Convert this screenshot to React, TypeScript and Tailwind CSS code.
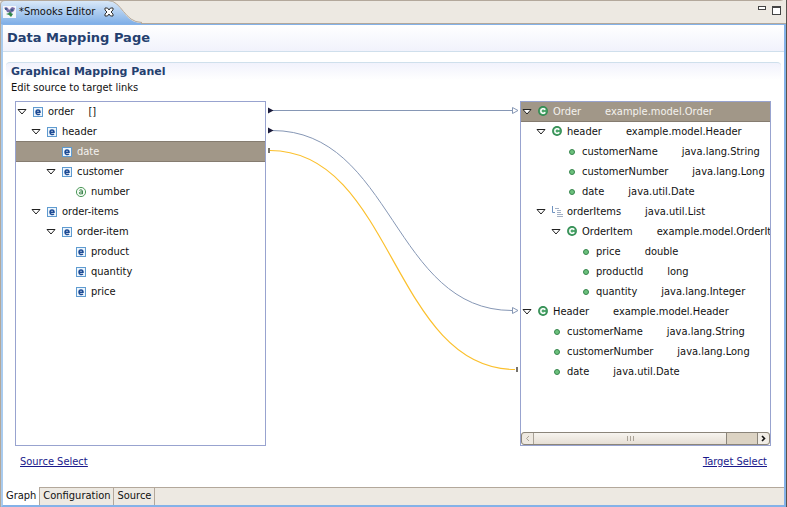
import { clsx } from "clsx"

type IconKind = "element" | "attribute" | "class" | "field" | "list"

interface TreeItem {
  label: string
  type?: string
  icon: IconKind
  level: number
  expanded?: boolean
  selected?: boolean
}

const sourceItems: TreeItem[] = [
  { label: "order", type: "[]", icon: "element", level: 0, expanded: true },
  { label: "header", icon: "element", level: 1, expanded: true },
  { label: "date", icon: "element", level: 2, selected: true },
  { label: "customer", icon: "element", level: 2, expanded: true },
  { label: "number", icon: "attribute", level: 3 },
  { label: "order-items", icon: "element", level: 1, expanded: true },
  { label: "order-item", icon: "element", level: 2, expanded: true },
  { label: "product", icon: "element", level: 3 },
  { label: "quantity", icon: "element", level: 3 },
  { label: "price", icon: "element", level: 3 },
]

const targetItems: TreeItem[] = [
  { label: "Order", type: "example.model.Order", icon: "class", level: 0, expanded: true, selected: true },
  { label: "header", type: "example.model.Header", icon: "class", level: 1, expanded: true },
  { label: "customerName", type: "java.lang.String", icon: "field", level: 2 },
  { label: "customerNumber", type: "java.lang.Long", icon: "field", level: 2 },
  { label: "date", type: "java.util.Date", icon: "field", level: 2 },
  { label: "orderItems", type: "java.util.List", icon: "list", level: 1, expanded: true },
  { label: "OrderItem", type: "example.model.OrderItem", icon: "class", level: 2, expanded: true },
  { label: "price", type: "double", icon: "field", level: 3 },
  { label: "productId", type: "long", icon: "field", level: 3 },
  { label: "quantity", type: "java.lang.Integer", icon: "field", level: 3 },
  { label: "Header", type: "example.model.Header", icon: "class", level: 0, expanded: true },
  { label: "customerName", type: "java.lang.String", icon: "field", level: 1 },
  { label: "customerNumber", type: "java.lang.Long", icon: "field", level: 1 },
  { label: "date", type: "java.util.Date", icon: "field", level: 1 },
]

const indents = ["pl-px", "pl-[15px]", "pl-[30px]", "pl-[44px]"]

function ItemIcon({ kind }: { kind: IconKind }) {
  if (kind === "element") {
    return (
      <svg width="12" height="12" viewBox="0 0 12 12" fill="none">
        <rect x="1.5" y="1.5" width="9" height="9" fill="#eef6fd" stroke="#5f9bd0" />
        <path d="M4 6.2H8C8 3.3 4 3.3 4 6.2C4 9 7 8.8 8 8" stroke="#1c4a94" strokeWidth="1.5" />
      </svg>
    )
  }
  if (kind === "attribute") {
    return (
      <svg width="12" height="12" viewBox="0 0 12 12" fill="none">
        <circle cx="6" cy="6" r="4.6" fill="#f2faf2" stroke="#4f9a5c" />
        <path d="M4.4 4.4C5 3.6 7.4 3.6 7.4 5V8.2M7.4 6C5 5.8 4.3 6.3 4.3 7.1C4.3 8.2 6.6 8.2 7.4 7.1" stroke="#2f7d42" />
      </svg>
    )
  }
  if (kind === "class") {
    return (
      <svg width="12" height="12" viewBox="0 0 12 12" fill="none">
        <circle cx="6" cy="5" r="4.9" fill="#2f8a50" />
        <circle cx="6" cy="5" r="3.7" fill="#4ca56a" />
        <path d="M8.2 3.8C7 2 3.8 2.5 3.8 5C3.8 7.5 7 8 8.2 6.2" stroke="#fff" strokeWidth="1.6" />
      </svg>
    )
  }
  if (kind === "list") {
    return (
      <svg width="12" height="12" viewBox="0 0 12 12" fill="none">
        <path d="M1.5 0V6.5H4" stroke="#6f93c0" />
        <path d="M4 2.5H8M6 4.5H10M6 6.5H10M6 8.5H12M6 10.5H12" stroke="#a3b1c6" />
      </svg>
    )
  }
  return (
    <svg width="12" height="12" viewBox="0 0 12 12" fill="none">
      <circle cx="6" cy="6" r="2.5" fill="#6cc07c" stroke="#36864d" />
    </svg>
  )
}

function TreeRow({ item }: { item: TreeItem }) {
  return (
    <li
      role="treeitem"
      aria-level={item.level + 1}
      aria-selected={!!item.selected}
      className={clsx(
        "flex h-5 items-center whitespace-nowrap",
        indents[item.level],
        item.selected && "bg-[#a19788] text-[#f4f2ee] shadow-[0_-1px_#857c70,inset_0_-1px_#857c70]"
      )}
    >
      <svg width="10" height="8" viewBox="0 0 10 8" fill="none" className="shrink-0">
        {item.expanded && <path d="M1 1.5H9L5 6Z" fill="#fff" stroke="#222" />}
      </svg>
      <span className="mr-1 ml-[5px] shrink-0">
        <ItemIcon kind={item.icon} />
      </span>
      <span>{item.label}</span>
      {item.type && (
        <span className={item.icon === "element" ? "ml-[14px]" : "ml-[24px]"}>{item.type}</span>
      )}
    </li>
  )
}

function Tree({ label, items }: { label: string; items: TreeItem[] }) {
  return (
    <ul role="tree" aria-label={label} className="flex-1 overflow-hidden">
      {items.map((item, i) => (
        <TreeRow key={i} item={item} />
      ))}
    </ul>
  )
}

function ScrollBar() {
  return (
    <div className="flex h-[13px] rounded-[3px] border border-[#8b857a] bg-[#dcd3c3]">
      <button aria-label="Scroll left" className="flex w-3 items-center justify-center rounded-l-sm border-r border-[#a9a297] bg-[#eee9e1]">
        <svg width="5" height="7" viewBox="0 0 5 7" fill="none">
          <path d="M4 1L1.5 3.5L4 6" stroke="#aaa397" />
        </svg>
      </button>
      <div className="flex flex-[194] items-center justify-center gap-[2px] border-r border-[#8b857a] bg-linear-to-b from-[#f7f4ef] to-[#e6dfd5]">
        <span className="h-[5px] w-px bg-[#aaa397]" />
        <span className="h-[5px] w-px bg-[#aaa397]" />
        <span className="h-[5px] w-px bg-[#aaa397]" />
      </div>
      <div className="flex-[30]" />
      <button aria-label="Scroll right" className="flex w-3 items-center justify-center rounded-r-sm border-l border-[#8b857a] bg-[#f1ede6]">
        <svg width="5" height="7" viewBox="0 0 5 7" fill="none">
          <path d="M1 1L3.5 3.5L1 6" stroke="#111" strokeWidth="1.6" />
        </svg>
      </button>
    </div>
  )
}

// One row is 20px high, so links start and end on row centres
function Links() {
  return (
    <svg width="254" height="345" viewBox="0 0 254 345" fill="none">
      <path d="M6 9.5H246" stroke="#8697b5" />
      <path d="M6 29.5C127 29.5 127 209.5 246 209.5" stroke="#8697b5" />
      <path d="M4 49.5C127 49.5 127 268.5 249 268.5" stroke="#fbc02d" strokeWidth="1.2" />
      <path d="M2 6.5L7.5 9.5L2 12.5ZM2 26.5L7.5 29.5L2 32.5Z" fill="#1b1b3a" />
      <path d="M246.5 6.5L252 9.5L246.5 12.5ZM246.5 206.5L252 209.5L246.5 212.5Z" fill="#fff" stroke="#8697b5" />
      <path d="M2 47H4V52H2ZM250 266H252V271H250Z" fill="#77736d" />
    </svg>
  )
}

function EditorTab() {
  return (
    <div className="relative h-6 w-[142px]">
      <svg width="142" height="24" viewBox="0 0 142 24" fill="none" className="absolute inset-0">
        <defs>
          <linearGradient id="tab" x1="0" y1="0" x2="0" y2="1">
            <stop offset="0" stopColor="#d9e8f8" />
            <stop offset="1" stopColor="#7fafe7" />
          </linearGradient>
        </defs>
        <path d="M0 24V5Q0 1 5 1H108C122 1 124 23 141 23V24Z" fill="url(#tab)" />
        <path d="M0.5 24V5Q0.5 0.5 5 0.5H108C122 0.5 124 22.5 142 22.5" stroke="#b3a89b" />
      </svg>
      <div className="relative flex h-6 items-center pl-[3px]">
        <svg width="13" height="12" viewBox="0 0 13 12">
          <rect width="13" height="12" fill="#f5f6fb" />
          <path d="M1 2L3 1L5 2L6 4L9 1L12 2L11 5L8 7L4 6L3 4Z" fill="#776ba8" />
          <path d="M2 2H4V4H2ZM8 3H10V5H8Z" fill="#3f5f87" />
          <path d="M3 8L6 7L7 5L8 7L10 8L8 11L6 9Z" fill="#31864a" />
        </svg>
        <span className="ml-[3px] w-20">*Smooks Editor</span>
        <button aria-label="Close" className="ml-[5px]">
          <svg width="10" height="10" viewBox="0 0 10 10" className="block">
            <path d="M1 1H3.5L5 3L6.5 1H9V3L7 5L9 7V9H6.5L5 7L3.5 9H1V7L3 5L1 3Z" fill="#fff" stroke="#333" />
          </svg>
        </button>
      </div>
    </div>
  )
}

export default function App() {
  return (
    <div className="flex min-h-screen flex-col border-r border-b border-r-[#57524d] border-b-[#b3a89b] bg-[#ede9e2] font-['DejaVu_Sans_Condensed','DejaVu_Sans',sans-serif] text-[11px] leading-4 text-[#111]">
      <header className="flex justify-between rounded-tr-md bg-[linear-gradient(#b3a89b_1px,transparent_1px_23px,#b3a89b_23px)]">
        <EditorTab />
        <div className="flex gap-[6px] pt-[6px] pr-[5px]">
          <button aria-label="Minimize" className="h-1 w-[8px] border border-[#444] bg-white" />
          <button aria-label="Maximize" className="h-[9px] w-[9px] border border-t-2 border-[#444] bg-white" />
        </div>
      </header>

      <div className="flex flex-1 flex-col border-l border-[#b3a89b]">
        <div className="flex flex-1 flex-col border-x-2 border-t border-b-2 border-[#84b2e8] border-l-[#a9cbee]">
          <main className="flex flex-1 flex-col bg-white">
            <h1 className="h-[27px] border-b border-[#cfdfec] bg-linear-to-b from-white to-[#f1f2fc] pl-1 font-['DejaVu_Sans',sans-serif] text-[13px] leading-[26px] font-bold text-[#24406f]">
              Data Mapping Page
            </h1>
            <section className="mx-[3px] mt-[10px] flex flex-1 flex-col">
              <h2 className="h-[18px] rounded-t border-t border-[#cfe0ec] bg-linear-to-b from-[#f1f2fc] to-white pl-[5px] font-['DejaVu_Sans',sans-serif] text-[11px] leading-[18px] font-bold text-[#24406f]">
                Graphical Mapping Panel
              </h2>
              <p className="pl-[5px]">Edit source to target links</p>

              <div className="mt-[5px] grid flex-1 grid-cols-[minmax(0,1fr)_254px_minmax(0,1fr)] pr-[10px] pl-[9px]">
                <div className="flex flex-col border border-[#98a3cf]">
                  <Tree label="Source" items={sourceItems} />
                </div>
                <Links />
                <div className="flex flex-col border border-[#98a3cf]">
                  <Tree label="Target" items={targetItems} />
                  <ScrollBar />
                </div>
              </div>

              <div className="flex justify-between pt-2 pr-[14px] pb-[17px] pl-[14px] text-[#1a1a8c] underline">
                <a href="#source">Source Select</a>
                <a href="#target">Target Select</a>
              </div>
            </section>
          </main>

          <nav className="flex h-[18px] bg-[linear-gradient(#b3a89b_1px,#ede9e2_1px)]">
            <button className="border-r border-[#b3a89b] bg-white px-[3px]">Graph</button>
            <button className="border-r border-[#b3a89b] px-[3px]">Configuration</button>
            <button className="border-r border-[#b3a89b] px-[3px]">Source</button>
          </nav>
        </div>
      </div>
    </div>
  )
}
